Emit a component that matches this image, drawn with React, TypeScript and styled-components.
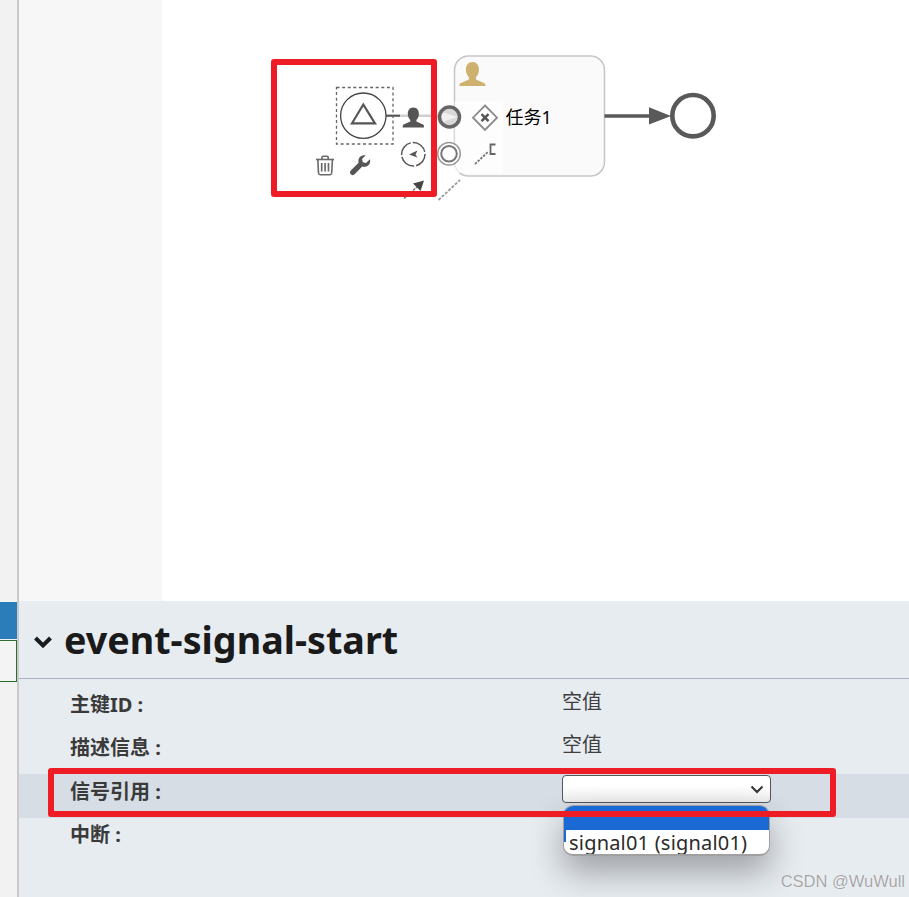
import * as React from 'react'
import styled, { createGlobalStyle } from 'styled-components'

const CJK = `'Noto Sans', 'Noto Sans CJK SC', sans-serif`

const GlobalStyle = createGlobalStyle`
  html, body {
    margin: 0;
    padding: 0;
    background: #fff;
    font-family: ${CJK};
  }
`

// drawing uses page coordinates, the viewBox shifts it into the canvas
const Diagram = () => (
  <DiagramSvg viewBox="162 0 747 601">
    <rect x="454.500" y="56" width="150" height="120" rx="14" fill="#fafafa" stroke="#c6c6c6" strokeWidth="1.500" />
    <path
      d="M472.500 62c-4.400 0-6.600 3.600-6.600 7.600 0 3.200 1.300 6 3 7.600v2.200l-8.500 3.800c-.8.400-.9 1.300-.9 2.800h25.900c0-1.500-.1-2.400-.9-2.800l-8.500-3.800v-2.200c1.700-1.600 3-4.400 3-7.600 0-4-2.200-7.600-6.500-7.600z"
      fill="#cfb16f"
    />
    <path d="M386 115.700H455" stroke="#d0d0d0" strokeWidth="2.500" fill="none" />
    <path d="M386 115.700H400" stroke="#555" strokeWidth="2" fill="none" />
    <rect x="454.500" y="101" width="48.500" height="72" fill="#fff" fillOpacity="0.65" />

    <rect x="336.500" y="87.500" width="56.500" height="56.500" fill="none" stroke="#666" strokeWidth="1.300" strokeDasharray="3 2.600" />
    <circle cx="363.300" cy="115.700" r="22.700" fill="#fff" stroke="#444" strokeWidth="1.300" />
    <path d="M363.300 104.500L375 123.300H352z" fill="none" stroke="#555" strokeWidth="2.200" />

    <path
      d="M413.300 107.500c-3.700 0-5.500 3-5.500 6.300 0 2.600 1 4.800 2.500 6.100v1.700l-6.700 3c-.8.400-.9 1.200-.9 2.800h21.300c0-1.600-.1-2.400-.9-2.800l-6.700-3v-1.700c1.500-1.300 2.500-3.500 2.500-6.100 0-3.300-1.800-6.300-5.600-6.300z"
      fill="#555"
    />
    <circle cx="449.500" cy="117" r="10" fill="#d8d8d8" />
    <path d="M440 111.500L458 117L440 122.500z" fill="#f0f0f0" />
    <circle cx="449.500" cy="117" r="10" fill="none" stroke="#666" strokeWidth="3.500" />

    <path d="M485 105.500L497 117.700L485 130L473 117.700z" fill="#fff" stroke="#8a8a8a" strokeWidth="1.800" />
    <path d="M481.500 114.200L488.500 121.200M488.500 114.200L481.500 121.200" stroke="#555" strokeWidth="2.500" />

    <circle cx="413.300" cy="154.300" r="11.700" fill="#fff" stroke="#555" strokeWidth="1.500" strokeDasharray="16.400 2" strokeDashoffset="1" />
    <path d="M409 154.500L417.500 150.500L415.500 154.500L417.500 157.500z" fill="#555" />

    <circle cx="449" cy="153.700" r="11.300" fill="#fff" stroke="#999" strokeWidth="1.500" />
    <circle cx="449" cy="153.700" r="7.800" fill="#fff" stroke="#777" strokeWidth="2" />

    <path d="M475 164L488 152" stroke="#777" strokeWidth="1.800" strokeDasharray="2.500 1.200" fill="none" />
    <path d="M495.500 144.500H490.500V154H495.500" stroke="#666" strokeWidth="1.800" fill="none" />

    <path d="M404 198.500L417 187" stroke="#777" strokeWidth="1.500" strokeDasharray="3 1" fill="none" />
    <path d="M424 180.500L420.500 191L413 183.500z" fill="#444" />
    <path d="M438.500 200L460 180" stroke="#999" strokeWidth="1.800" strokeDasharray="3 1.500" fill="none" />

    <g fill="none" stroke="#6a6a6a" strokeWidth="1.600">
      <path d="M316 159.500H334" />
      <path d="M322 159.500V157.500C322 156.700 322.500 156.300 323.200 156.300H327C327.700 156.300 328.200 156.700 328.200 157.500V159.500" />
      <path d="M317.800 159.500L318.500 173C318.600 174.200 319.200 174.700 320.200 174.700H330C331 174.700 331.600 174.200 331.700 173L332.400 159.500" />
      <path d="M321.700 163V171.500M325.100 163V171.500M328.500 163V171.500" strokeWidth="1.700" />
    </g>
    <path
      d="M369.900 159.200L366 163L362.800 162.200L362 159L365.800 155.300C362.600 154.700 359.500 156.200 358.600 159.200C358.200 160.500 358.300 161.700 358.600 162.800L350.800 170.500C349.700 171.600 349.700 173.300 350.800 174.300C351.900 175.400 353.500 175.400 354.600 174.300L362.300 166.600C363.500 167 364.800 167 366 166.600C369.200 165.600 370.900 162.400 369.900 159.200z"
      fill="#555"
    />

    <TaskLabel x="505.500" y="124">任务1</TaskLabel>

    <path d="M604.500 116H652" stroke="#595959" strokeWidth="3.500" fill="none" />
    <path d="M649 107.300L671 116L649 124.500z" fill="#595959" />
    <circle cx="693" cy="115.700" r="20.700" fill="#fff" stroke="#595959" strokeWidth="4.600" />
  </DiagramSvg>
)

const Chevron = () => (
  <ChevronSvg viewBox="0 0 20 14">
    <path d="M2.500 3L10 10.500L17.500 3" />
  </ChevronSvg>
)

export default function App(): JSX.Element {
  return (
    <Page>
      <GlobalStyle />
      <SideStrip>
        <StripBlue />
        <StripBox />
      </SideStrip>
      <Main>
        <Canvas>
          <Palette />
          <DrawArea>
            <Diagram />
          </DrawArea>
        </Canvas>
        <Panel>
          <PanelHeader>
            <Chevron />
            <PanelTitle>event-signal-start</PanelTitle>
          </PanelHeader>
          <Rows>
            <Row>
              <RowLabel>主键ID :</RowLabel>
              <RowValue>空值</RowValue>
            </Row>
            <Row>
              <RowLabel>描述信息 :</RowLabel>
              <RowValue>空值</RowValue>
            </Row>
            <Row $active>
              <RowLabel>信号引用 :</RowLabel>
              <SelectWrap>
                <SelectBox>
                  <SelectArrow viewBox="0 0 14 9">
                    <path d="M1.500 1.500L7 7L12.500 1.500" />
                  </SelectArrow>
                </SelectBox>
                <OptionList>
                  <OptionItem $selected>&nbsp;</OptionItem>
                  <OptionItem>signal01 (signal01)</OptionItem>
                </OptionList>
              </SelectWrap>
            </Row>
            <Row>
              <RowLabel>中断 :</RowLabel>
            </Row>
          </Rows>
        </Panel>
      </Main>
      <CanvasMark />
      <RowMark />
      <Watermark>CSDN @WuWull</Watermark>
    </Page>
  )
}

// styles
const Page = styled.div`
  position: relative;
  display: flex;
  width: 909px;
  height: 897px;
  overflow: hidden;
`

const SideStrip = styled.div`
  width: 17px;
  padding-top: 602px;
  background: #f2f2f2;
  border-right: 2px solid #c9c9c9;
`

const StripBlue = styled.div`
  height: 37px;
  background: #2a7db8;
`

const StripBox = styled.div`
  height: 42px;
  margin-top: 1px;
  box-sizing: border-box;
  background: #f4f4f4;
  border: 1px solid #2c6e2c;
  border-left: none;
`

const Main = styled.div`
  flex: 1;
  display: flex;
  flex-direction: column;
  min-width: 0;
`

const Canvas = styled.div`
  display: flex;
  height: 601px;
`

const Palette = styled.div`
  width: 143px;
  background: #f7f7f7;
`

const DrawArea = styled.div`
  flex: 1;
  background: #fff;
`

const DiagramSvg = styled.svg`
  display: block;
  width: 747px;
  height: 601px;
`

const TaskLabel = styled.text`
  font-family: ${CJK};
  font-size: 18px;
  fill: #000;
`

const Panel = styled.div`
  flex: 1;
  background: #e7ecf1;
`

const PanelHeader = styled.div`
  display: flex;
  align-items: center;
  gap: 11px;
  height: 78px;
  box-sizing: border-box;
  padding-left: 14px;
  border-bottom: 1px solid #a9b0c0;
`

const ChevronSvg = styled.svg`
  width: 20px;
  height: 14px;
  margin-top: 5px;
  fill: none;
  stroke: #1c1c1c;
  stroke-width: 4;
`

const PanelTitle = styled.h1`
  margin: 0;
  font-size: 37.700px;
  font-weight: 700;
  line-height: 1;
  color: #1a1a1a;
`

const Rows = styled.div`
  padding-top: 8px;
`

const Row = styled.div<{ $active?: boolean }>`
  display: flex;
  align-items: center;
  box-sizing: border-box;
  height: 43.500px;
  padding: 0 0 11px 51px;
  background: ${(props) => (props.$active ? '#d6dde5' : 'transparent')};
`

const RowLabel = styled.div`
  width: 492px;
  flex: none;
  font-size: 20px;
  font-weight: 700;
  color: #3a3a3a;
`

const RowValue = styled.div`
  font-size: 20px;
  margin-top: -6px;
  color: #3f3f3f;
`

const SelectWrap = styled.div`
  position: relative;
  align-self: flex-start;
  width: 209px;
  margin-top: 1px;
`

const SelectBox = styled.div`
  display: flex;
  justify-content: flex-end;
  align-items: center;
  height: 28px;
  box-sizing: border-box;
  padding-right: 6px;
  border: 1px solid #555;
  border-radius: 4px;
  background: linear-gradient(#fff 40%, #ececec);
`

const SelectArrow = styled.svg`
  width: 14px;
  height: 9px;
  fill: none;
  stroke: #333;
  stroke-width: 2;
`

const OptionList = styled.div`
  position: absolute;
  top: 30px;
  left: 1px;
  width: 207px;
  height: 51px;
  overflow: hidden;
  box-sizing: border-box;
  border: 1px solid #a0a0a0;
  border-bottom-width: 2px;
  border-radius: 10px;
  background: linear-gradient(#1a69d4, #1a69d4) left top / 2px 36px no-repeat, #fff;
  box-shadow: 0 16px 34px rgba(0, 0, 0, 0.32);
`

const OptionItem = styled.div<{ $selected?: boolean }>`
  height: 24px;
  padding-left: 5px;
  font-size: 20px;
  letter-spacing: 0.2px;
  line-height: 26px;
  white-space: nowrap;
  color: #2a2a2a;
  background: ${(props) => (props.$selected ? '#1a69d4' : 'transparent')};
`

const CanvasMark = styled.div`
  position: absolute;
  left: 271px;
  top: 59px;
  width: 166px;
  height: 138px;
  box-sizing: border-box;
  border: 6.500px solid #ee1c25;
  border-radius: 3px;
`

const RowMark = styled.div`
  position: absolute;
  left: 48px;
  top: 768px;
  width: 788px;
  height: 49px;
  box-sizing: border-box;
  border: 6.500px solid #ee1c25;
  border-radius: 3px;
`

const Watermark = styled.div`
  position: absolute;
  right: 4px;
  bottom: 6px;
  font-family: 'Liberation Sans', sans-serif;
  font-size: 16.500px;
  color: rgba(150, 150, 150, 0.85);
  text-shadow: 0 0 1px #fff;
`
